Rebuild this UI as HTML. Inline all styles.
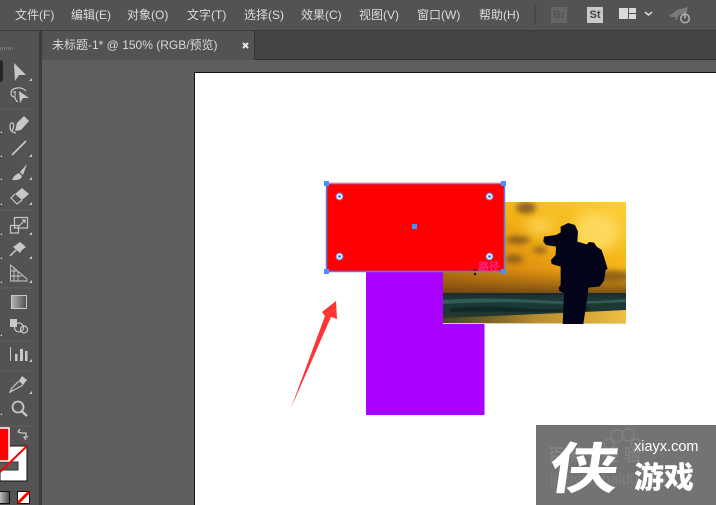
<!DOCTYPE html>
<html><head><meta charset="utf-8"><style>
html,body{margin:0;padding:0}
#p{position:relative;width:716px;height:505px;overflow:hidden;background:#5c5c5c;font-family:"Liberation Sans","Noto Sans CJK SC",sans-serif}
.a{position:absolute}
.m{position:absolute;top:7px;font-size:12px;line-height:16px;color:#dcdcdc;white-space:nowrap}
</style></head><body><div id="p">
<div class="a" style="left:0;top:0;width:716px;height:30px;background:#535353"></div>
<div class="a" style="left:0;top:30px;width:716px;height:1px;background:#3a3a3a"></div>
<div class="a" style="left:0;top:31px;width:716px;height:29px;background:#444"></div>
<div class="a" style="left:0;top:59px;width:716px;height:1px;background:#333"></div>
<span class="m" style="left:15px">文件(F)</span>
<span class="m" style="left:71px">编辑(E)</span>
<span class="m" style="left:127px">对象(O)</span>
<span class="m" style="left:187px">文字(T)</span>
<span class="m" style="left:244px">选择(S)</span>
<span class="m" style="left:301px">效果(C)</span>
<span class="m" style="left:359px">视图(V)</span>
<span class="m" style="left:417px">窗口(W)</span>
<span class="m" style="left:479px">帮助(H)</span>
<div class="a" style="left:534px;top:5px;width:2px;height:20px;background:#484848"></div>
<div class="a" style="left:551px;top:7px;width:16px;height:16px;background:#666;color:#535353;font:bold 11px/16px 'Liberation Sans',sans-serif;text-align:center">Br</div>
<div class="a" style="left:587px;top:7px;width:16px;height:16px;background:#cacaca;color:#444;font:bold 11px/16px 'Liberation Sans',sans-serif;text-align:center">St</div>
<svg class="a" style="left:610px;top:0" width="106" height="30" viewBox="610 0 106 30">
<path d="M619 8h9v11h-9zM629 8h7v5h-7zM629 14h7v5h-7z" fill="#dadada"/>
<path d="M645 12l3.500 3 3.500-3" fill="none" stroke="#ddd" stroke-width="1.500"/>
<path d="M669 16l8-6 11-3-2 9-3-2-4 1-3 6-1-4-3 0z" fill="#7a7a7a"/>
<circle cx="685" cy="18.500" r="4.300" fill="none" stroke="#b0b0b0" stroke-width="1.500"/>
<path d="M685 12.500v6" stroke="#b0b0b0" stroke-width="1.500"/>
</svg>
<div class="a" style="left:42px;top:31px;width:213px;height:29px;background:#535353;border-right:1px solid #333;box-sizing:border-box"></div>
<span class="a" style="left:52px;top:37px;font-size:12px;line-height:16px;color:#d8d8d8;white-space:nowrap">未标题-1* @ 150% (RGB/预览)</span>
<svg class="a" style="left:241px;top:41px" width="9" height="9"><path d="M2 2l5 5M7 2l-5 5" stroke="#e8e8e8" stroke-width="2"/></svg>
<div class="a" style="left:0;top:31px;width:39px;height:474px;background:#535353"></div>
<div class="a" style="left:39px;top:31px;width:3px;height:474px;background:#3b3b3b"></div>
<div class="a" style="left:42px;top:60px;width:674px;height:445px;background:#5e5e5e"></div>
<div class="a" style="left:0;top:47px;width:14px;height:3px;background:repeating-linear-gradient(90deg,#777 0 1px,#535353 1px 2px)"></div>
<div class="a" style="left:0;top:60px;width:3px;height:22px;background:#262626;border-radius:0 3px 3px 0"></div>

<svg class="a" style="left:0;top:50px" width="40" height="455" viewBox="0 50 40 455">
<defs><linearGradient id="g1"><stop offset="0" stop-color="#b4b4b4"/><stop offset="1" stop-color="#505050"/></linearGradient>
<linearGradient id="g2"><stop offset="0" stop-color="#c8c8c8"/><stop offset="1" stop-color="#4a4a4a"/></linearGradient></defs>
<g fill="#c8c8c8">
<path d="M14 63L26 75 19 75 15 81Z"/>
<path d="M19 91L29 98 23 98 20 103Z"/>
<path d="M24 116L29 121 21 130 15 131 17 123Z"/>
<path d="M27 164L20 172 23 175ZM19 173Q14 175 12 180 21 181 22 176Z"/>
<path d="M22 188L29 194 22 200 15 194Z"/>
<path d="M20 242L26 247 22 250 20 253 13 247 16 245Z"/>
<path d="M10 319h7v8h-7z"/>
<path d="M15 354h2.500v7H15zM20 349h3v12h-3zM25 351h2.500v10H25zM10 347h1v14h-1z"/>
<path d="M22 376L27 380 23 385 19 381Z"/>
<path d="M32 81h-3l3-3zM32 157h-3l3-3zM32 180h-3l3-3zM32 205h-3l3-3zM32 235h-3l3-3zM32 259h-3l3-3zM32 283h-3l3-3zM32 362h-3l3-3zM32 394h-3l3-3zM2 133H0l2-2zM2 157H0l2-2zM2 180H0l2-2zM2 205H0l2-2zM2 235H0l2-2zM2 259H0l2-2zM2 283H0l2-2zM2 336H0l2-2zM2 415H0l2-2z"/>
</g>
<g fill="none" stroke="#c8c8c8" stroke-width="1.200">
<path d="M26 91Q22 87 17 88 11 89 11 93 11 97 15 97 15 100 18 102"/>
<path d="M15 91v5M13 92h3" stroke-width="1"/>
<path d="M16 133Q10 132 10 127 10 122 13 123 15 125 12 131"/>
<path d="M12 155L26 141" stroke-width="1.800"/>
<path d="M15 194L11 198 17 204 22 200"/>
<rect x="10.500" y="225.500" width="8" height="7.500"/><rect x="14.500" y="217.500" width="13" height="10.500"/>
<path d="M19 226L25 220M22 220h3v3"/>
<path d="M10 256L16 250" stroke-width="1.500"/>
<path d="M10.500 281V265L27 279V281ZM10 271h7M10 276h12M14 267v14M18 271v10" stroke-width=".9"/>
<circle cx="19" cy="327.500" r="4.500"/><circle cx="24" cy="329.500" r="3.500"/>
<path d="M19 381L12 388 10 392 14 390 23 385"/>
<circle cx="18" cy="407" r="5.500" stroke-width="1.800"/>
<path d="M22 411.500L27 416" stroke-width="2.400"/>
<path d="M19 430l-1 2 3 1h5v4M26 440l-2-3h4M20 429l-2 3"/>
</g>
<rect x="11.500" y="295.500" width="15" height="13" fill="url(#g1)" stroke="#c8c8c8"/>
<path d="M0 109h34M0 210h34M0 288h34M0 341h34M0 371h34M0 426h34" stroke="#5f5f5f"/>
<path d="M0 446h27v35H0z" fill="#fff" stroke="#111"/>
<rect x="-1" y="462" width="19" height="8" fill="#5a5a5a" stroke="#333"/>
<path d="M0 472L27 446" stroke="#f00" stroke-width="2"/>
<rect x="-2" y="428" width="11" height="33" fill="#f00" stroke="#fff" stroke-width="1.500"/>
<rect x="-1" y="491.500" width="10.500" height="12" fill="url(#g2)" stroke="#111"/>
<rect x="17.500" y="491.500" width="12" height="12" fill="#fff" stroke="#111"/>
<path d="M18 503l11-11" stroke="#f00" stroke-width="3"/>
</svg>

<div class="a" style="left:194px;top:72px;width:522px;height:433px;background:#fff;border-left:1px solid #111;border-top:1px solid #111;box-sizing:border-box"></div>

<svg class="a" style="left:0;top:0" width="716" height="505" viewBox="0 0 716 505">
<defs>
<linearGradient id="sky" x1="0" y1="1" x2="1" y2="0">
<stop offset="0" stop-color="#a8600c"/><stop offset=".35" stop-color="#de8e10"/><stop offset=".62" stop-color="#f4b418"/><stop offset="1" stop-color="#fbcf36"/>
</linearGradient>
<linearGradient id="low" x1="0" y1="0" x2="0" y2="1"><stop offset="0" stop-color="#1a2a30"/><stop offset=".2" stop-color="#1c3a3a"/><stop offset=".6" stop-color="#1c3632"/><stop offset="1" stop-color="#3a3a22"/></linearGradient>
<linearGradient id="hz" x1="0" y1="0" x2="0" y2="1"><stop offset="0" stop-color="#a0680e" stop-opacity="0"/><stop offset="1" stop-color="#6a4216"/></linearGradient>
<linearGradient id="gold" x1="0" y1="0" x2="1" y2="0"><stop offset="0" stop-color="#a07020" stop-opacity=".25"/><stop offset=".5" stop-color="#d8a030" stop-opacity=".8"/><stop offset="1" stop-color="#f0c040"/></linearGradient>
<filter id="b"><feGaussianBlur stdDeviation="3"/></filter>
<filter id="b2"><feGaussianBlur stdDeviation="6"/></filter>
<clipPath id="c"><rect x="443" y="202" width="183" height="122"/></clipPath>
</defs>
<rect x="366" y="271" width="118.500" height="144" fill="#a900ff"/>
<g clip-path="url(#c)">
<rect x="443" y="202" width="183" height="91" fill="url(#sky)"/>
<g filter="url(#b2)" fill="#ffe77a" opacity=".65"><ellipse cx="596" cy="232" rx="24" ry="20"/><ellipse cx="540" cy="226" rx="14" ry="7"/></g>
<g fill="#76501a" filter="url(#b)" opacity=".8">
<ellipse cx="526" cy="208" rx="10" ry="6"/>
<ellipse cx="518" cy="240" rx="12" ry="4"/>
<ellipse cx="514" cy="259" rx="9" ry="4"/>
<ellipse cx="540" cy="250" rx="7" ry="3"/>
<ellipse cx="612" cy="276" rx="20" ry="5"/>
</g>
<rect x="443" y="268" width="183" height="25" fill="url(#hz)" opacity=".85"/>
<rect x="443" y="293" width="183" height="31" fill="url(#low)"/>
<path d="M443 300q40-3 90 0t93-1v3q-50 3-90 1t-93 1z" fill="#3e6a62" opacity=".7" filter="url(#b3)"/>
<path d="M450 308q35-3 70 0t70-1v3q-40 3-70 2t-70 0z" fill="#0e2224" opacity=".7"/>
<path d="M443 318q80-3 183-8v14H443z" fill="url(#gold)"/>
<path d="M443 323h183v1H443z" fill="#d8d0b0"/>
<g transform="translate(440 195) scale(.3333)">
<path fill="#03041a" d="M362 95L385 84 405 90 414 110 412 140 440 148 447 141 462 143 470 155 485 165 495 195 503 222 497 225 492 258 478 275 445 278 443 300 430 387 368 387 372 295 358 288 356 278 362 270 362 215 335 207 333 195 347 180 348 155 318 150 310 140 312 125 348 120 362 112Z"/>
</g>
</g>
<rect x="326.500" y="183.500" width="178" height="88" fill="#f00" stroke="#4a86f0" stroke-width="1.500"/>
<path d="M327 183h177" stroke="#ff8a8a"/>
<g fill="#4f8dff">
<rect x="324" y="181" width="5" height="5"/><rect x="501" y="181" width="5" height="5"/>
<rect x="324" y="269" width="5" height="5"/><rect x="501" y="269" width="5" height="5"/>
<rect x="412" y="224" width="5" height="5"/>
</g>
<g fill="#fff" stroke="#6a9aff" stroke-width="1.200">
<circle cx="339.500" cy="196.500" r="3.300"/><circle cx="489.500" cy="196.500" r="3.300"/>
<circle cx="339.500" cy="256.500" r="3.300"/><circle cx="489.500" cy="256.500" r="3.300"/>
</g>
<g fill="#3f6fe0">
<circle cx="339.500" cy="196.500" r="1.400"/><circle cx="489.500" cy="196.500" r="1.400"/>
<circle cx="339.500" cy="256.500" r="1.400"/><circle cx="489.500" cy="256.500" r="1.400"/>
</g>
<path d="M291 408L325 316 322 312 336 301 337 319 331 317Z" fill="#fd3535"/>
<text x="478.500" y="270" font-size="10.500" fill="#ff2a9a" stroke="#ff2a9a" stroke-width=".25" font-family="'Noto Sans CJK SC',sans-serif">路径</text>
<path d="M473 270h4M474 273l2 2M476 273l-2 2" stroke="#111"/>
</svg>

<div class="a" style="left:536px;top:425px;width:180px;height:80px;background:#737373;overflow:hidden">
<svg class="a" style="left:60px;top:2px" width="50" height="26"><g fill="none" stroke="#808080" stroke-width="1.500"><circle cx="21" cy="9" r="6"/><circle cx="32" cy="8" r="6"/><circle cx="13" cy="17" r="5"/><circle cx="40" cy="17" r="5"/></g></svg>
<span class="a" style="left:12px;top:21px;font:bold 17px/20px 'Liberation Sans','Noto Sans CJK SC',sans-serif;color:#818181;white-space:nowrap;letter-spacing:5px">百度 经验</span>
<span class="a" style="left:14px;top:47px;font:15px/16px 'Liberation Sans',sans-serif;color:#7f7f7f;white-space:nowrap">jingyan.baidu.com</span>
<span class="a" style="left:17px;top:0;font:700 64px/80px 'Noto Sans CJK SC',sans-serif;color:#fff;display:block;transform:skewX(-8deg) scale(1.08,.86)">侠</span>
<span class="a" style="left:98px;top:13px;font:14.500px/18px 'Liberation Sans',sans-serif;color:#fff;white-space:nowrap">xiayx.com</span>
<span class="a" style="left:98px;top:32px;font:900 30px/36px 'Noto Sans CJK SC',sans-serif;color:#fff;white-space:nowrap">游戏</span>
</div>
</div></body></html>
